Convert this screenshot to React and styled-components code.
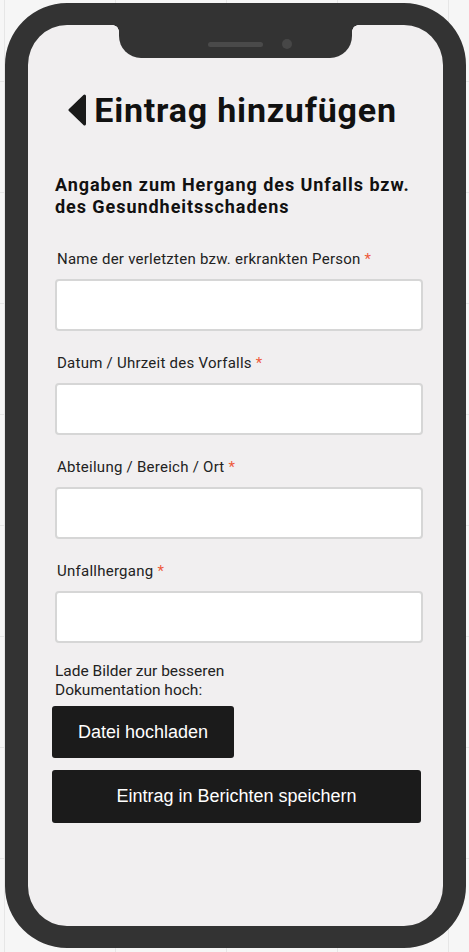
import React from "react"
import styled, { createGlobalStyle } from "styled-components"

const fields = [
  "Name der verletzten bzw. erkrankten Person",
  "Datum / Uhrzeit des Vorfalls",
  "Abteilung / Bereich / Ort",
  "Unfallhergang",
]

const App = () => {
  return (
    <>
      <GlobalStyle />
      <Phone>
        <Notch>
          <Speaker />
          <Camera />
        </Notch>
        <Screen>
          <Header>
            <BackIcon viewBox="0 0 18 32" aria-hidden="true">
              <path d="M16.5 2 L2 16 L16.5 30 Z" />
            </BackIcon>
            <Title>Eintrag hinzufügen</Title>
          </Header>

          <SectionTitle>
            Angaben zum Hergang des Unfalls bzw. des Gesundheitsschadens
          </SectionTitle>

          <Form>
            {fields.map(label => (
              <Field key={label}>
                <Label>
                  {label} <Required>*</Required>
                </Label>
                <Input type="text" />
              </Field>
            ))}
          </Form>

          <UploadHint>
            Lade Bilder zur besseren
            <br />
            Dokumentation hoch:
          </UploadHint>
          <UploadButton type="button">Datei hochladen</UploadButton>
          <SaveButton type="button">Eintrag in Berichten speichern</SaveButton>
        </Screen>
      </Phone>
    </>
  )
}

const GlobalStyle = createGlobalStyle`
  html, body {
    margin: 0;
    padding: 0;
  }
  body {
    min-height: 100vh;
    background-color: #f6f6f6;
    background-image:
      linear-gradient(to right, #e6e6e6 1px, transparent 1px),
      linear-gradient(to bottom, #e6e6e6 1px, transparent 1px);
    background-size: 111px 111px;
    background-position: 4px 81px;
    font-family: Roboto, "Liberation Sans", Arial, sans-serif;
  }
`

const Phone = styled.div`
  position: relative;
  box-sizing: border-box;
  width: 461px;
  height: 945px;
  margin: 3px 0 0 5px;
  border-style: solid;
  border-color: #333333;
  border-width: 22px 23px;
  border-radius: 62px;
  background: #f1eff0;
  overflow: hidden;
`

const Notch = styled.div`
  position: absolute;
  top: 0;
  left: 91px;
  box-sizing: border-box;
  width: 233px;
  height: 33px;
  padding: 5px 0 0 89px;
  display: flex;
  align-items: center;
  align-content: flex-start;
  gap: 19px;
  background: #333333;
  border-radius: 0 0 22px 22px;

  &::before,
  &::after {
    content: "";
    position: absolute;
    top: 0;
    width: 6px;
    height: 6px;
  }
  &::before {
    left: -6px;
    background: radial-gradient(circle at 0 100%, transparent 5.5px, #333333 6px);
  }
  &::after {
    right: -6px;
    background: radial-gradient(circle at 100% 100%, transparent 5.5px, #333333 6px);
  }
`

const Speaker = styled.span`
  width: 55px;
  height: 5px;
  border-radius: 3px;
  background: #4a4a4a;
`

const Camera = styled.span`
  width: 10px;
  height: 10px;
  border-radius: 50%;
  background: #474747;
`

const Screen = styled.main`
  display: flex;
  flex-direction: column;
  align-items: flex-start;
  padding: 65px 20px 0 27px;
  color: #222222;
`

const Header = styled.header`
  align-self: stretch;
  display: flex;
  justify-content: center;
  align-items: center;
  gap: 8px;
  margin: 0 -20px 0 -27px;
  padding-right: 6px;
`

const BackIcon = styled.svg`
  width: 18px;
  height: 32px;
  flex: none;

  path {
    fill: #1a1a1a;
    stroke: #1a1a1a;
    stroke-width: 3;
    stroke-linejoin: round;
  }
`

const Title = styled.h1`
  margin: 0;
  font-size: 34px;
  line-height: 40px;
  font-weight: 700;
  letter-spacing: 0.8px;
  color: #111111;
`

const SectionTitle = styled.h2`
  margin: 44px 0 0;
  max-width: 370px;
  font-size: 18px;
  line-height: 22px;
  font-weight: 700;
  letter-spacing: 0.95px;
  color: #111111;
`

const Form = styled.div`
  align-self: stretch;
  display: flex;
  flex-direction: column;
  gap: 23px;
  margin-top: 32px;
`

const Field = styled.label`
  display: flex;
  flex-direction: column;
  gap: 11px;
`

const Label = styled.span`
  padding-left: 2px;
  font-size: 15px;
  line-height: 18px;
  letter-spacing: 0.25px;
  color: #222222;
`

const Required = styled.span`
  color: #ee5a3c;
`

const Input = styled.input`
  box-sizing: border-box;
  width: 100%;
  height: 52px;
  margin: 0;
  border: 2px solid #d6d6d6;
  border-radius: 4px;
  background: #ffffff;
  outline: none;
`

const UploadHint = styled.p`
  margin: 19px 0 0;
  font-size: 15.5px;
  line-height: 19px;
  color: #222222;
`

const DarkButton = styled.button`
  box-sizing: border-box;
  height: 52px;
  margin-left: -3px;
  border: none;
  border-radius: 3px;
  background: #1b1b1b;
  color: #ffffff;
  font-family: "Liberation Sans", Arial, sans-serif;
  font-size: 18px;
  cursor: pointer;
`

const UploadButton = styled(DarkButton)`
  margin-top: 6px;
  padding: 0 26px;
`

const SaveButton = styled(DarkButton)`
  width: 369px;
  height: 53px;
  margin-top: 12px;
`

export default App
